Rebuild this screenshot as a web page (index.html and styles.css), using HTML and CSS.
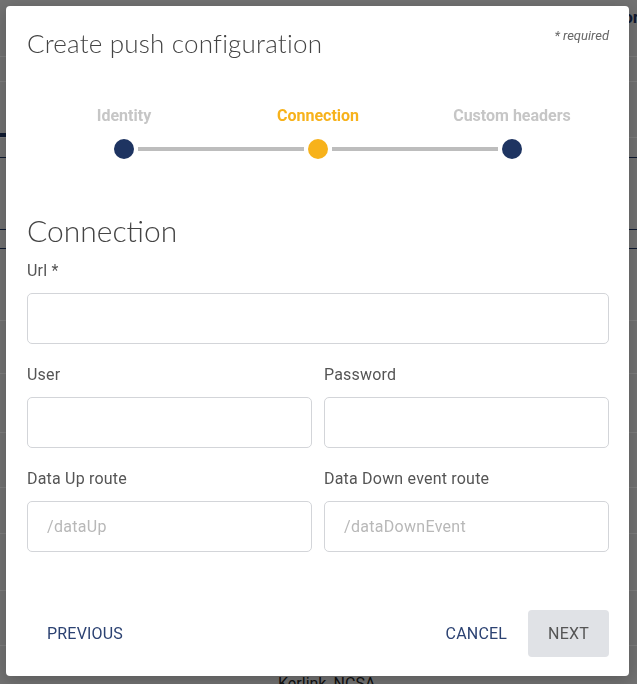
FILE: index.html
```html
<!DOCTYPE html>
<html lang="en">
<head>
    <meta charset="UTF-8">
    <meta name="viewport" content="width=device-width, initial-scale=1.0">
    <title>Create push configuration</title>
    <link rel="stylesheet" href="styles.css">
</head>
<body>
    <div class="page">
        <header class="topbar"><span class="topbar-user">Operator</span></header>
        <div class="subbar"></div>
        <nav class="tabs"><span class="tab active"></span></nav>
        <div class="row dark h19"></div>
        <div class="row dark h71"></div>
        <div class="row dark h18"></div>
        <div class="row h71"></div>
        <div class="row h52"></div>
        <div class="row h58"></div>
        <div class="row h54"></div>
        <div class="row h45"></div>
        <div class="row h56"></div>
        <div class="row h54"></div>
        <div class="row last"><span class="cell">Kerlink, NCSA</span></div>
    </div>

    <div class="overlay">
        <div class="modal">
            <div class="modal-header">
                <h2 class="modal-title">Create push configuration</h2>
                <span class="required">* required</span>
            </div>

            <div class="stepper">
                <div class="step-labels">
                    <span class="step-label">Identity</span>
                    <span class="step-label active">Connection</span>
                    <span class="step-label">Custom headers</span>
                </div>
                <div class="track">
                    <span class="dot"></span>
                    <span class="bar"></span>
                    <span class="dot active"></span>
                    <span class="bar"></span>
                    <span class="dot"></span>
                </div>
            </div>

            <h3 class="section-title">Connection</h3>

            <div class="fields">
                <div class="field wide">
                    <label for="url">Url *</label>
                    <input type="text" id="url">
                </div>
                <div class="field">
                    <label for="user">User</label>
                    <input type="text" id="user">
                </div>
                <div class="field">
                    <label for="password">Password</label>
                    <input type="password" id="password">
                </div>
                <div class="field">
                    <label for="upRoute">Data Up route</label>
                    <input type="text" id="upRoute" placeholder="/dataUp">
                </div>
                <div class="field">
                    <label for="downRoute">Data Down event route</label>
                    <input type="text" id="downRoute" placeholder="/dataDownEvent">
                </div>
            </div>

            <div class="modal-footer">
                <button class="btn">Previous</button>
                <div class="footer-right">
                    <button class="btn">Cancel</button>
                    <button class="btn btn-next">Next</button>
                </div>
            </div>
        </div>
    </div>
</body>
</html>
```

FILE: styles.css
```css
* {
    box-sizing: border-box;
}
html, body {
    margin: 0;
    height: 100%;
    overflow: hidden;
}
body {
    font-family: Roboto, "Liberation Sans", sans-serif;
    background-color: #e2e2e2;
    color: #333;
}

/* page behind the dialog */
.topbar {
    height: 57px;
    border-bottom: 1px solid #fafafa;
    display: flex;
    justify-content: flex-end;
    padding: 7px 0 0;
}
.topbar-user {
    font-weight: 700;
    font-size: 17px;
    color: #1e3461;
    margin-right: -2px;
}
.subbar {
    height: 25px;
    border-bottom: 1px solid #fafafa;
}
.tabs {
    height: 56px;
    border-bottom: 1px solid #fafafa;
    display: flex;
    align-items: flex-end;
}
.tab.active {
    width: 120px;
    height: 4px;
    background-color: #1e3461;
}
.row {
    border-bottom: 1px solid #fafafa;
}
.row.dark {
    border-bottom-color: #1e3461;
}
.h18 { height: 19px; }
.h19 { height: 20px; }
.h45 { height: 46px; }
.h52 { height: 53px; }
.h54 { height: 55px; }
.h56 { height: 57px; }
.h58 { height: 59px; }
.h71 { height: 72px; }
.row.last {
    border-bottom: none;
    padding: 28px 0 0 278px;
}
.cell {
    font-size: 16px;
    line-height: 20px;
    color: #222;
}

/* dialog */
.overlay {
    position: fixed;
    top: 0;
    left: 0;
    right: 0;
    bottom: 0;
    background-color: rgba(0, 0, 0, 0.5);
    padding: 6px 8px 8px 6px;
}
.modal {
    width: 623px;
    height: 670px;
    background-color: #fff;
    border-radius: 4px;
    padding: 22px 20px 19px 21px;
    display: flex;
    flex-direction: column;
    box-shadow: 0 4px 16px rgba(0, 0, 0, 0.2);
}
.modal-header {
    display: flex;
    justify-content: space-between;
    align-items: flex-start;
}
.modal-title {
    margin: 0;
    font-family: Lato, "Open Sans", sans-serif;
    font-weight: 300;
    font-size: 26px;
    line-height: 30px;
    letter-spacing: 0.2px;
    color: #444;
}
.required {
    margin-top: 0;
    font-size: 13px;
    line-height: 16px;
    font-style: italic;
    color: #666;
}

.stepper {
    margin-top: 49px;
}
.step-labels {
    display: grid;
    grid-template-columns: repeat(3, 1fr);
    text-align: center;
}
.step-label {
    font-size: 16px;
    line-height: 18px;
    font-weight: 700;
    color: #c6c6c6;
}
.step-label.active {
    color: #f7b21b;
}
.track {
    display: flex;
    align-items: center;
    margin: 14px 87px 0;
}
.dot {
    width: 20px;
    height: 20px;
    border-radius: 50%;
    background-color: #1e3461;
    flex-shrink: 0;
}
.dot.active {
    background-color: #f7b21b;
}
.bar {
    flex: 1;
    height: 4px;
    margin: 0 4px;
    background-color: #bdbdbd;
}

.section-title {
    margin: 53px 0 0;
    font-family: Lato, "Open Sans", sans-serif;
    font-weight: 300;
    font-size: 30px;
    line-height: 36px;
    color: #444;
}

.fields {
    margin-top: 13px;
    display: grid;
    grid-template-columns: 1fr 1fr;
    gap: 21px 12px;
}
.field {
    display: flex;
    flex-direction: column;
}
.field.wide {
    grid-column: span 2;
}
.field label {
    font-size: 16px;
    line-height: 20px;
    letter-spacing: 0.2px;
    color: #555;
    margin-bottom: 12px;
}
.field input {
    height: 51px;
    padding: 0 19px;
    border: 1px solid #d3d5d9;
    border-radius: 5px;
    font-family: Roboto, "Liberation Sans", sans-serif;
    font-size: 16px;
    letter-spacing: 0.3px;
    color: #333;
    outline: none;
}
.field input::placeholder {
    color: #b8b8b8;
}

.modal-footer {
    margin-top: auto;
    display: flex;
    justify-content: space-between;
}
.footer-right {
    display: flex;
}
.btn {
    height: 47px;
    padding: 0 20px;
    border: none;
    border-radius: 4px;
    background: none;
    font-family: Roboto, "Liberation Sans", sans-serif;
    font-size: 16px;
    letter-spacing: 0.2px;
    text-transform: uppercase;
    color: #2c4272;
    cursor: pointer;
}
.btn-next {
    margin-left: 1px;
    background-color: #e0e2e6;
    color: #555;
}
```
